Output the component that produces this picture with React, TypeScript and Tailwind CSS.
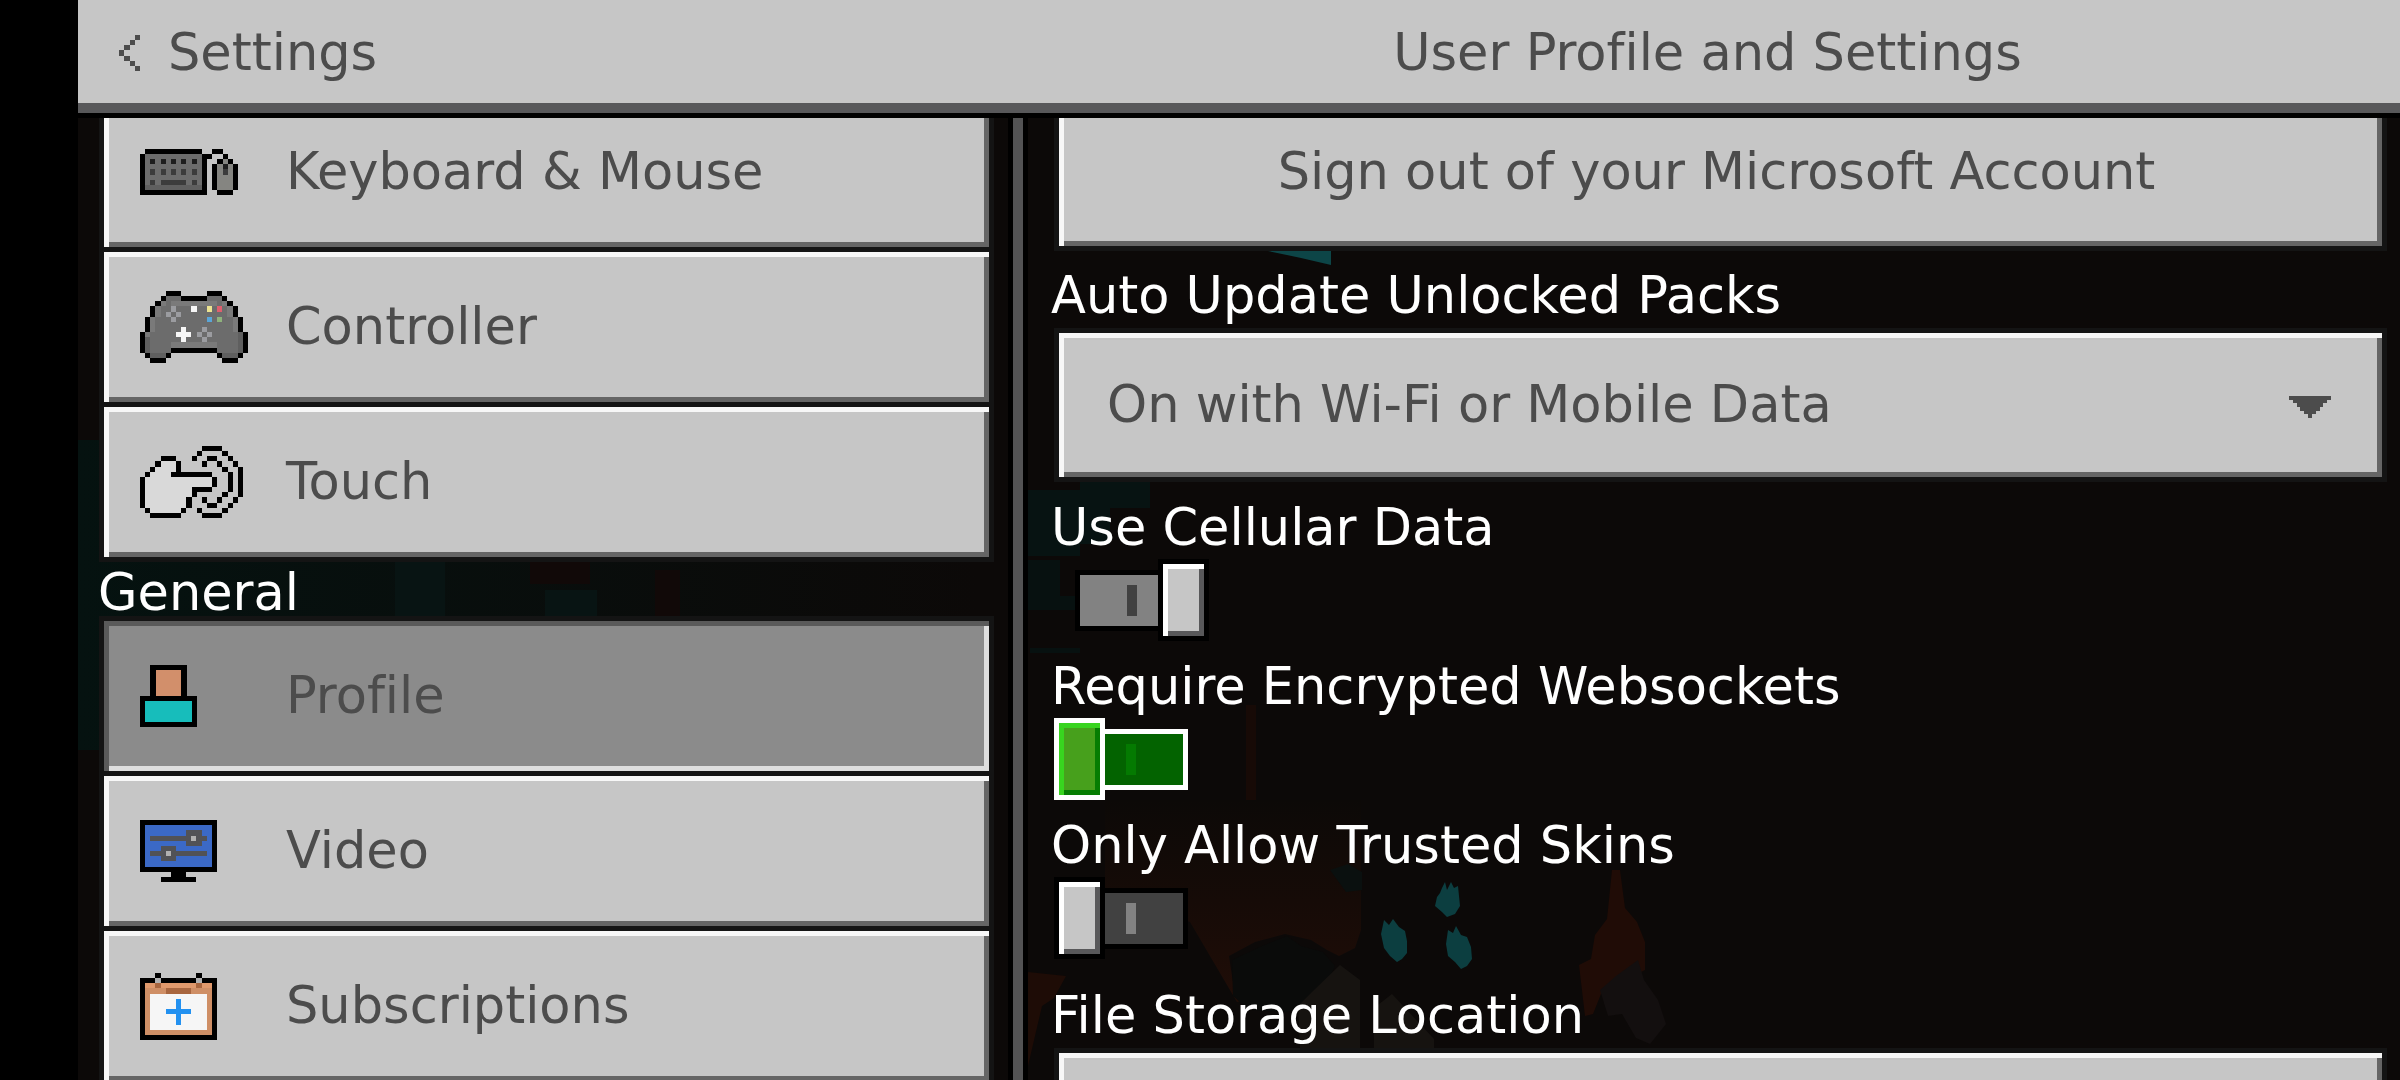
import { useState } from "react";
import clsx from "clsx";

const PALETTE: Record<string, string> = {
  K: "#000000",
  g: "#6c6c6c",
  h: "#7a7a7a",
  f: "#5f5f5f",
  d: "#1e1e1e",
  e: "#3c3c3c",
  m: "#858581",
  l: "#9b9ca0",
  w: "#f6f6f6",
  y: "#ece391",
  r: "#df5f6e",
  u: "#5aa6d8",
  n: "#8fb37c",
  s: "#d9d9d9",
  p: "#d28f6b",
  t: "#17bdbb",
  b: "#3b69c6",
  c: "#515256",
  o: "#cf8f66",
  q: "#e0996c",
  z: "#a8663f",
  x: "#b0b0b0",
  i: "#2391f0",
  a: "#4c4c4c",
};

const KEYBOARD = [
  ".KKKKKKKKKKK..KK...",
  "KgggggggggggKK..K..",
  "KgdgdgdgdgdgK..KmK.",
  "KgggggggggggK.KmdmK",
  "KgegegegegegK.KmemK",
  "KgggggggggggK.KmmmK",
  "KgegeeeeegegK.KmmmK",
  "KfffffffffffK.KmmmK",
  "KKKKKKKKKKKKK..KKK.",
];

const CONTROLLER = [
  ".....KKK.....KKK.....",
  "....KgggKKKKKgggK....",
  "...KhghhhhhhhhhghK...",
  "..KhgglgggwggygrghK..",
  "..KhglglggggggggghK..",
  ".KhggglggggggugngghK.",
  ".KhggggggggggggggghK.",
  ".KhgggggwggglggggghK.",
  "KhgggggwwwglglgggggfK",
  "KfggggggwggglggggggfK",
  "KfgggghhhhhhhhhggggfK",
  "KfggggKKKKKKKKKggggfK",
  ".KfffK.........KfffK.",
  "..KKK...........KKK..",
];

const TOUCH = [
  "............KKKK....",
  "...........K....K...",
  "....KKK...K..KK..K..",
  "...KsssK....K..K..K.",
  "..KssssK........K..K",
  ".KssssKKKKKKKK...K.K",
  "KsssssssssssssK..K.K",
  "KsssssssssssssK..K.K",
  "KsssssssssKKKK...K.K",
  "KsssssssssK.....K..K",
  "KssssssssK..K..K..K.",
  "KssssssssK...KK..K..",
  ".KssssssK..K....K...",
  "..KKKKKK....KKKK....",
];

const PROFILE = [
  "..KKKKKKK..",
  "..KpppppK..",
  "..KpppppK..",
  "..KpppppK..",
  "..KpppppK..",
  "..KpppppK..",
  "KKKKKKKKKKK",
  "KtttttttttK",
  "KtttttttttK",
  "KtttttttttK",
  "KtttttttttK",
  "KKKKKKKKKKK",
];

const VIDEO = [
  "KKKKKKKKKKKKKKK",
  "KbbbbbbbbbbbbbK",
  "KbbbbbbbbcccbbK",
  "KbccccccccxccbK",
  "KbbbbbbbbcccbbK",
  "KbbbcccbbbbbbbK",
  "KbcccxcccccccbK",
  "KbbbcccbbbbbbbK",
  "KbbbbbbbbbbbbbK",
  "KKKKKKKKKKKKKKK",
  "......KKK......",
  "....KKKKKKK....",
];

const SUBSCRIPTIONS = [
  "...K.......K...",
  "KKKxKKKKKKKxKKK",
  "KqqzqqqqqqqzqqK",
  "KoooozzzzzooooK",
  "KowwwwwwwwwwwoK",
  "KowwwwwiwwwwwoK",
  "KowwwwwiwwwwwoK",
  "KowwwiiiiiwwwoK",
  "KowwwwwiwwwwwoK",
  "KowwwwwiwwwwwoK",
  "KowwwwwwwwwwwoK",
  "KoooooooooooooK",
  "KKKKKKKKKKKKKKK",
];

const BACK = ["...a", "..a.", ".a..", "a...", ".a..", "..a.", "...a"];

const ARROW = [
  "aaaaaaaaaaa",
  ".aaaaaaaaa.",
  "..aaaaaaa..",
  "...aaaaa...",
  "....aaa....",
  ".....a.....",
];

function PixelIcon({ rows, className }: { rows: string[]; className: string }) {
  return (
    <svg
      className={className}
      viewBox={`0 0 ${rows[0].length} ${rows.length}`}
      preserveAspectRatio="none"
      shapeRendering="crispEdges"
      aria-hidden="true"
    >
      {rows.flatMap((row, y) =>
        [...row].map((cell, x) =>
          cell === "." ? null : (
            <rect key={`${x}-${y}`} x={x} y={y} width="1" height="1" fill={PALETTE[cell]} />
          )
        )
      )}
    </svg>
  );
}

type NavItem = { label: string; rows: string[]; size: string };

const CONTROLS: NavItem[] = [
  { label: "Keyboard & Mouse", rows: KEYBOARD, size: "w-[98px] h-[46px]" },
  { label: "Controller", rows: CONTROLLER, size: "w-[108px] h-[72px]" },
  { label: "Touch", rows: TOUCH, size: "w-[103px] h-[72px]" },
];

const GENERAL: NavItem[] = [
  { label: "Profile", rows: PROFILE, size: "w-[57px] h-[62px]" },
  { label: "Video", rows: VIDEO, size: "w-[77px] h-[62px]" },
  { label: "Subscriptions", rows: SUBSCRIPTIONS, size: "w-[77px] h-[67px]" },
];

const RAISED =
  "bg-[#c6c6c6] text-[#4c4c4c] shadow-[inset_5px_5px_0_#f7f7f7,inset_-5px_-5px_0_#656565,0_0_0_5px_#141414]";
const PRESSED =
  "bg-[#8b8b8b] text-[#4c4c4c] shadow-[inset_5px_5px_0_#5a5a5a,inset_-5px_-5px_0_#dedede,0_0_0_5px_#141414]";

function NavList({
  items,
  active,
  onSelect,
}: {
  items: NavItem[];
  active: string;
  onSelect: (label: string) => void;
}) {
  return (
    <div className="ml-[6px] flex flex-col gap-[5px]">
      {items.map((item) => (
        <button
          key={item.label}
          type="button"
          onClick={() => onSelect(item.label)}
          className={clsx(
            "flex h-[150px] items-center pl-9 text-left",
            item.label === active ? PRESSED : RAISED
          )}
        >
          <span className="flex w-[146px] shrink-0">
            <PixelIcon rows={item.rows} className={item.size} />
          </span>
          {item.label}
        </button>
      ))}
    </div>
  );
}

function Toggle({
  id,
  label,
  defaultChecked = false,
  focused = false,
}: {
  id: string;
  label: string;
  defaultChecked?: boolean;
  focused?: boolean;
}) {
  const [on, setOn] = useState(defaultChecked);

  return (
    <div className="flex flex-col items-start gap-[7px]">
      <label htmlFor={id} className="leading-[48px]">
        {label}
      </label>
      <label
        htmlFor={id}
        className={clsx("flex items-center", on ? "ml-6 flex-row-reverse" : "ml-[3px]")}
      >
        <input
          id={id}
          type="checkbox"
          role="switch"
          className="sr-only"
          checked={on}
          onChange={(e) => setOn(e.target.checked)}
        />
        <span
          className={clsx(
            "h-[82px] w-[51px] border-[5px]",
            focused
              ? "border-white bg-[#47a01c] shadow-[inset_5px_5px_0_#38d41f,inset_-5px_-5px_0_#067d02]"
              : "border-black bg-[#c6c6c6] shadow-[inset_5px_5px_0_#ffffff,inset_-5px_-5px_0_#58585a]"
          )}
        />
        <span
          className={clsx(
            "flex h-[61px] w-[83px] items-center border-y-[5px]",
            on ? "justify-end border-l-[5px] pr-[21px]" : "border-r-[5px] pl-[21px]",
            focused ? "border-white bg-[#036300]" : "border-black",
            !focused && (on ? "bg-[#828282]" : "bg-[#414141]")
          )}
        >
          <span
            className={clsx(
              "h-[31px] w-[10px]",
              focused ? "bg-[#047a01]" : on ? "bg-[#414141]" : "bg-[#828282]"
            )}
          />
        </span>
      </label>
    </div>
  );
}

function Dropdown({ id, label, options }: { id: string; label: string; options: string[] }) {
  return (
    <div className="flex flex-col items-stretch gap-[13px]">
      <label htmlFor={id} className="leading-[48px]">
        {label}
      </label>
      <div className="relative ml-2">
        <select id={id} className={clsx("h-[144px] w-full appearance-none pl-12 pr-28", RAISED)}>
          {options.map((option) => (
            <option key={option}>{option}</option>
          ))}
        </select>
        <PixelIcon
          rows={ARROW}
          className="pointer-events-none absolute right-[51px] top-[63px] h-[22px] w-[42px]"
        />
      </div>
    </div>
  );
}

function Backdrop() {
  return (
    <svg
      className="absolute inset-0 h-full w-full"
      viewBox="78 0 2322 1080"
      preserveAspectRatio="xMidYMid slice"
      aria-hidden="true"
    >
      <defs>
        <linearGradient id="glow" x1="0" y1="0" x2="0" y2="1">
          <stop offset="0" stopColor="#0c0907" />
          <stop offset="1" stopColor="#200d07" />
        </linearGradient>
        <linearGradient id="warped" x1="0" y1="0" x2="1" y2="0">
          <stop offset="0" stopColor="#051210" />
          <stop offset="1" stopColor="#0c0908" />
        </linearGradient>
      </defs>
      <rect x="78" width="2322" height="1080" fill="#0c0908" />
      <rect x="78" y="440" width="900" height="310" fill="url(#warped)" />
      <path d="M395 562h50v60h-50zM545 590h52v32h-52z" fill="#081413" />
      <path d="M530 562h60v22h-60zM655 570h25v52h-25z" fill="#110908" />
      <path d="M1028 490h52v-8h70v26h-40v36h-30v12h-52z" fill="#071312" />
      <path d="M1028 560h32v36h18v14h-50zM1088 598h60v6h-60zM1030 648h50v5h-50z" fill="#071110" />
      <path d="M1268 251h63v14l-30-7z" fill="#0d4547" />
      <path d="M1246 705h10v170h-10z" fill="#170a06" />
      <path
        d="M1105 800h256v130l-6 18-16 8-12-6-16-10-26-6-30 8-26 14 6 40 10 4-8 2-47-80-85-30z"
        fill="url(#glow)"
      />
      <path d="M1330 870l18-6 14 8v18l-16 2z" fill="#0a100f" />
      <path d="M1028 972l38 4-12 22-12 8-14 60z" fill="#1e0c06" />
      <path
        d="M1612 870h8l5 38 12 14 8 20v28l-12 6-18 10-14 8-8 20-8 2-6-51 12-6 4-24 12-16z"
        fill="#200c06"
      />
      <path d="M1600 990l16-14 22-16 6 20 14 20 8 24-16 20-14-6-14-24-14 2z" fill="#130f0f" />
      <path d="M1232 960l30-14 25-10 14 10 22 6 12 14-12 26-16 14-20 6-38-2-16-14z" fill="#0a0b0a" />
      <path d="M1312 992l28-27 20 15v68h-60l-2-42zM1374 1008l18-14 42 45v9h-60z" fill="#161310" />
      <g fill="#0c3e40">
        <path d="M1442 888l3-6 2 8 4-8 3 6 4-2 1 10 1 10-5 8-8 3-5-5-7-6 2-9 3-4z" />
        <path d="M1384 920l5 5 4-6 6 8 6 4 2 10v12l-5 6-5 3-7-6-6-8-3-14z" />
        <path d="M1448 930l5 3 3-7 5 9 6 2 4 10 1 12-5 7-6 3-6-7-7-6-2-12z" />
      </g>
    </svg>
  );
}

export default function App() {
  const [active, setActive] = useState("Profile");

  return (
    <div className="flex h-screen overflow-hidden bg-black pl-[78px] font-['DejaVu_Sans',sans-serif] text-[51px] leading-[48px] [font-variant-ligatures:none]">
      <div className="relative flex min-w-0 flex-1 flex-col">
        <Backdrop />

        <header className="relative z-10 flex h-[118px] shrink-0 border-b-[5px] border-black bg-[#c6c6c6] text-[#4c4c4c] shadow-[inset_0_-10px_0_#58585a]">
          <button type="button" className="flex w-[945px] items-center gap-[28px] pb-2 pl-[41px]">
            <PixelIcon rows={BACK} className="h-[36px] w-[21px]" />
            Settings
          </button>
          <h1 className="flex flex-1 items-center justify-center pb-2 pr-2">
            User Profile and Settings
          </h1>
        </header>

        <div className="relative flex min-h-0 flex-1">
          <nav className="w-[930px] shrink-0 overflow-hidden pl-5 pr-[19px] text-white">
            <div className="-mt-[21px]">
              <NavList items={CONTROLS} active={active} onSelect={setActive} />
              <h2 className="mb-1 mt-3">General</h2>
              <NavList items={GENERAL} active={active} onSelect={setActive} />
            </div>
          </nav>

          <div className="w-5 shrink-0 border-x-[5px] border-black bg-[#535354]" />

          <main className="min-w-0 flex-1 overflow-hidden pl-[23px] pr-[18px] text-white">
            <div className="-mt-[21px] flex flex-col">
              <button type="button" className={clsx("mb-[26px] ml-2 h-[149px] pr-2", RAISED)}>
                Sign out of your Microsoft Account
              </button>
              <Dropdown
                id="auto-update"
                label="Auto Update Unlocked Packs"
                options={["On with Wi-Fi or Mobile Data", "On with Wi-Fi Only", "Off"]}
              />
              <div className="mb-[33px] mt-[27px] flex flex-col gap-[22px]">
                <Toggle id="cellular" label="Use Cellular Data" defaultChecked />
                <Toggle id="websockets" label="Require Encrypted Websockets" focused />
                <Toggle id="skins" label="Only Allow Trusted Skins" />
              </div>
              <Dropdown id="storage" label="File Storage Location" options={["External", "Application"]} />
            </div>
          </main>
        </div>
      </div>
    </div>
  );
}
